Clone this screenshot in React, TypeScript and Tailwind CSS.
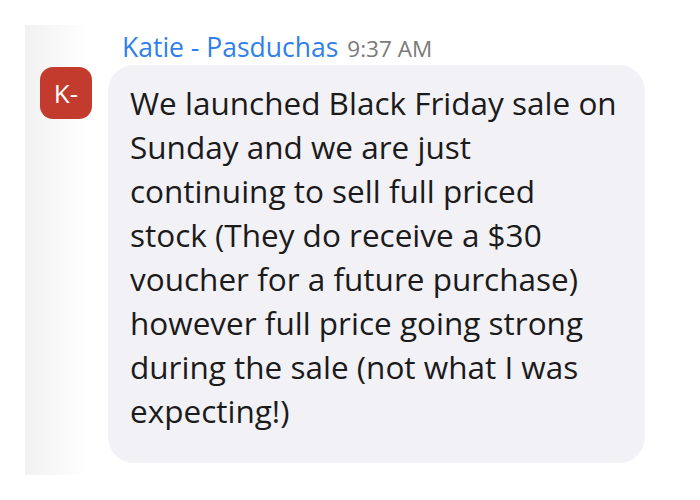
const lines = [
  'We launched Black Friday sale on',
  'Sunday and we are just',
  'continuing to sell full priced',
  'stock (They do receive a $30',
  'voucher for a future purchase)',
  'however full price going strong',
  'during the sale (not what I was',
  'expecting!)',
];

export default function App() {
  return (
    <div className="w-[700px] h-[500px] bg-white p-[25px] font-['Open_Sans',sans-serif]">
      <div className="h-[450px] flex bg-[linear-gradient(to_right,#f1f1f1_0px,#fbfbfb_45px,#ffffff_65px)] pl-[15px] pt-[4px]">
        <div className="w-[52px] h-[52px] mt-[38px] rounded-[13px] bg-[#c23b2c] flex items-center justify-center text-white text-[26px] shrink-0">
          K-
        </div>
        <div className="ml-[16px] flex flex-col">
          <div className="pl-[14px] h-[36px] flex items-baseline gap-[9px]">
            <span className="text-[26.5px] leading-[36px] text-[#2f80ed]">Katie - Pasduchas</span>
            <span className="text-[22.5px] leading-[36px] text-[#7a7a7a]">9:37 AM</span>
          </div>
          <div className="w-[537px] h-[398px] rounded-[26px] bg-[#f2f1f6] pl-[22px] pt-[16px]">
            {lines.map((l) => (
              <div key={l} className="text-[31.5px] leading-[44px] text-[#1b1b1b] whitespace-nowrap">
                {l}
              </div>
            ))}
          </div>
        </div>
      </div>
    </div>
  );
}
